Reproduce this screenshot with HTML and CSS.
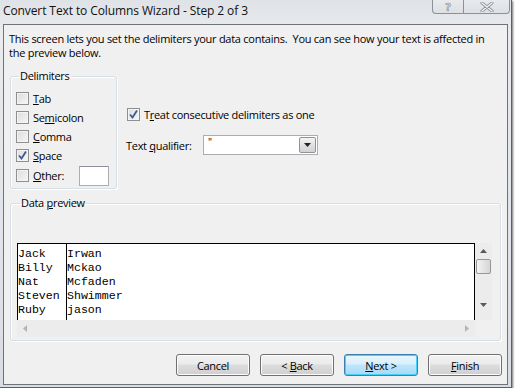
FILE: index.html
```html
<!DOCTYPE html>
<html lang="en">
<head>
  <meta charset="UTF-8" />
  <title>Convert Text to Columns Wizard - Step 2 of 3</title>
  <link rel="stylesheet" href="styles.css">
</head>
<body>
  <div class="window">
    <div class="titlebar">
      <span class="title">Convert Text to Columns Wizard - Step 2 of 3</span>
      <div class="caption-btns">
        <span class="cap help">?</span>
        <span class="cap close">
          <svg width="14" height="10" viewBox="0 0 14 10">
            <path d="M2 1 L12 9 M12 1 L2 9" stroke="#8a8f96" stroke-width="3" stroke-linecap="round" fill="none"/>
            <path d="M2 1 L12 9 M12 1 L2 9" stroke="#f4f5f7" stroke-width="1.4" stroke-linecap="round" fill="none"/>
          </svg>
        </span>
      </div>
    </div>

    <div class="client">
      <p class="intro">This screen lets you set the delimiters your data contains.&nbsp; You can see how your text is affected in<br>the preview below.</p>

      <div class="options">
        <fieldset class="group delims">
          <legend>Delimiters</legend>
          <label class="check"><span class="box"></span><span><u>T</u>ab</span></label>
          <label class="check"><span class="box"></span><span>Se<u>m</u>icolon</span></label>
          <label class="check"><span class="box"></span><span><u>C</u>omma</span></label>
          <label class="check"><span class="box checked"></span><span><u>S</u>pace</span></label>
          <label class="check other"><span class="box"></span><span><u>O</u>ther:</span><span class="textbox"></span></label>
        </fieldset>

        <div class="side">
          <label class="check treat"><span class="box checked"></span><span>T<u>r</u>eat consecutive delimiters as one</span></label>
          <div class="qualifier">
            <span>Text <u>q</u>ualifier:</span>
            <div class="combo">
              <span class="combo-value">"</span>
              <span class="combo-drop">
                <svg width="7" height="4" viewBox="0 0 7 4"><path d="M0 0 H7 L3.5 4 Z" fill="#222"/></svg>
              </span>
            </div>
          </div>
        </div>
      </div>

      <fieldset class="group preview">
        <legend>Data <u>p</u>review</legend>
        <div class="grid">
          <div class="sheet">
            <div class="col first">Jack<br>Billy<br>Nat<br>Steven<br>Ruby</div>
            <div class="col">Irwan<br>Mckao<br>Mcfaden<br>Shwimmer<br>jason</div>
          </div>
          <div class="vscroll">
            <svg width="7" height="4" viewBox="0 0 7 4"><path d="M3.5 0 L7 4 H0 Z" fill="#5a5a5a"/></svg>
            <span class="thumb"></span>
            <svg class="down" width="7" height="4" viewBox="0 0 7 4"><path d="M0 0 H7 L3.5 4 Z" fill="#5a5a5a"/></svg>
          </div>
          <div class="hscroll">
            <svg width="4" height="7" viewBox="0 0 4 7"><path d="M4 0 V7 L0 3.5 Z" fill="#b4b4b4"/></svg>
            <svg width="4" height="7" viewBox="0 0 4 7"><path d="M0 0 V7 L4 3.5 Z" fill="#b4b4b4"/></svg>
          </div>
          <div class="corner"></div>
        </div>
      </fieldset>

      <div class="buttons">
        <button class="btn">Cancel</button>
        <button class="btn">&lt; <u>B</u>ack</button>
        <button class="btn default"><u>N</u>ext &gt;</button>
        <button class="btn"><u>F</u>inish</button>
      </div>
    </div>
  </div>
</body>
</html>
```

FILE: styles.css
```css
* {
  margin: 0;
  padding: 0;
  box-sizing: border-box;
}

body {
  background: #ffffff;
  font-family: 'Open Sans', 'Noto Sans', sans-serif;
  font-size: 11px;
  letter-spacing: -0.3px;
  color: #000;
}

u {
  text-decoration: underline;
  text-underline-offset: 1px;
}

.window {
  width: 512px;
  height: 388px;
  padding: 0 3px 2px 3px;
  background: linear-gradient(180deg, #dfe2e6 0%, #e9ebee 8%, #d9dde2 100%);
  border-right: 1px solid #5c5f63;
  border-bottom: 1px solid #5c5f63;
  box-shadow: 1px 1px 2px rgba(0,0,0,0.55);
}

/* title bar */

.titlebar {
  height: 24px;
  display: flex;
  justify-content: space-between;
  align-items: flex-start;
  margin-right: -3px;
}

.title {
  font-size: 12px;
  line-height: 21px;
  color: #111;
  letter-spacing: -0.1px;
}

.caption-btns {
  display: flex;
  margin-right: 1px;
}

.cap {
  height: 14px;
  border: 1px solid #8c9198;
  border-top: none;
  background: linear-gradient(180deg, #e8eaed, #dde0e4);
  display: flex;
  align-items: center;
  justify-content: center;
}

.help {
  width: 31px;
  border-radius: 0 0 0 4px;
  border-right: none;
  font-size: 11px;
  line-height: 13px;
  padding-bottom: 1px;
  color: #eef0f2;
  -webkit-text-stroke: 0.6px #7f858c;
  font-weight: bold;
}

.close {
  width: 47px;
  border-radius: 0 0 4px 0;
}

/* client area */

.client {
  height: 361px;
  width: 505px;
  background: #f0f0f0;
  border: 1px solid #6e7378;
}

.intro {
  margin: 7px 0 0 5px;
  line-height: 14px;
  letter-spacing: -0.26px;
}

.options {
  display: flex;
  margin-top: 9px;
}

.group {
  border: 1px solid #d5dfe5;
  border-radius: 3px;
  box-shadow: inset 1px 1px 0 #fff, 1px 1px 0 #fff;
  margin-left: 6px;
}

.group legend {
  line-height: 14px;
  margin-left: 3px;
  padding: 0 1px;
}

.delims {
  width: 107px;
  height: 120px;
  padding: 6px 7px 0 5px;
}

.check {
  display: flex;
  align-items: center;
  gap: 4px;
  height: 19px;
}

.check.other {
  height: 21px;
}

.box {
  width: 13px;
  height: 13px;
  border: 1px solid #8e8f8f;
  background: linear-gradient(135deg, #dcdcdc, #f6f6f6);
  box-shadow: inset 0 0 0 1px #f4f4f4;
  flex: none;
}

.box.checked {
  background-image: url("data:image/svg+xml;utf8,<svg xmlns='http://www.w3.org/2000/svg' width='11' height='11' viewBox='0 0 11 11'><path d='M2 5.5 L4.5 8.5 L9 1.5' stroke='%233b5a94' stroke-width='1.8' fill='none'/></svg>"), linear-gradient(135deg, #dcdcdc, #f6f6f6);
  background-repeat: no-repeat;
  background-position: center;
}

.textbox {
  width: 30px;
  height: 20px;
  margin-left: auto;
  background: #fff;
  border: 1px solid #abadb3;
  border-top-color: #8e9099;
}

.side {
  margin-left: 9px;
}

.treat {
  margin-top: 36px;
  margin-left: 1px;
}

.qualifier {
  display: flex;
  align-items: center;
  margin-top: 11px;
}

.qualifier > span {
  width: 77px;
}

.combo {
  width: 115px;
  height: 20px;
  background: #fff;
  border: 1px solid #abadb3;
  display: flex;
  justify-content: space-between;
  align-items: stretch;
}

.combo-value {
  padding-left: 4px;
  font-size: 10px;
  line-height: 12px;
}

.combo-drop {
  width: 17px;
  margin: 1px;
  border: 1px solid #8f9296;
  border-radius: 2px;
  background: linear-gradient(180deg, #f4f4f4, #e0e0e0 50%, #d2d2d2);
  display: flex;
  align-items: center;
  justify-content: center;
}

/* data preview */

.preview {
  width: 491px;
  height: 145px;
  margin-top: 7px;
  padding: 33px 0 0 6px;
}

.grid {
  display: grid;
  grid-template-columns: 458px 17px;
  grid-template-rows: 77px 17px;
}

.sheet {
  background: #fff;
  border: 1px solid #000;
  border-bottom: none;
  display: flex;
  font-family: 'Liberation Mono', monospace;
  font-size: 11.6px;
  letter-spacing: 0;
  line-height: 14px;
  padding-top: 3px;
}

.col.first {
  width: 49px;
  border-right: 1px solid #000;
  margin-top: -3px;
  padding-top: 3px;
}

.vscroll {
  background: #ececec;
  display: flex;
  flex-direction: column;
  align-items: center;
  padding-top: 6px;
}

.thumb {
  width: 15px;
  height: 15px;
  margin-top: 6px;
  border: 1px solid #979797;
  border-radius: 2px;
  background: linear-gradient(90deg, #f4f4f4, #e4e4e4 50%, #d6d6d6);
}

.vscroll .down {
  margin-top: 29px;
}

.hscroll {
  background: #ececec;
  display: flex;
  justify-content: space-between;
  align-items: center;
  padding: 0 6px;
}

.corner {
  background: #f0f0f0;
}

/* buttons */

.buttons {
  display: flex;
  justify-content: flex-end;
  gap: 10px;
  margin-top: 13px;
  padding-right: 5px;
}

.btn {
  width: 74px;
  height: 22px;
  font-family: 'Open Sans', 'Noto Sans', sans-serif;
  font-size: 11px;
  letter-spacing: -0.3px;
  color: #000;
  border: 1px solid #707070;
  border-radius: 3px;
  background: linear-gradient(180deg, #f2f2f2 0%, #ebebeb 45%, #dddddd 50%, #cfcfcf 100%);
  box-shadow: inset 0 0 0 1px #fcfcfc;
}

.btn.default {
  border-color: #3c7fb1;
  box-shadow: inset 0 0 0 1px #48d0fc;
  background: linear-gradient(180deg, #eaf6fd 0%, #d9f0fc 45%, #bee6fd 50%, #a7d9f5 100%);
}
```
